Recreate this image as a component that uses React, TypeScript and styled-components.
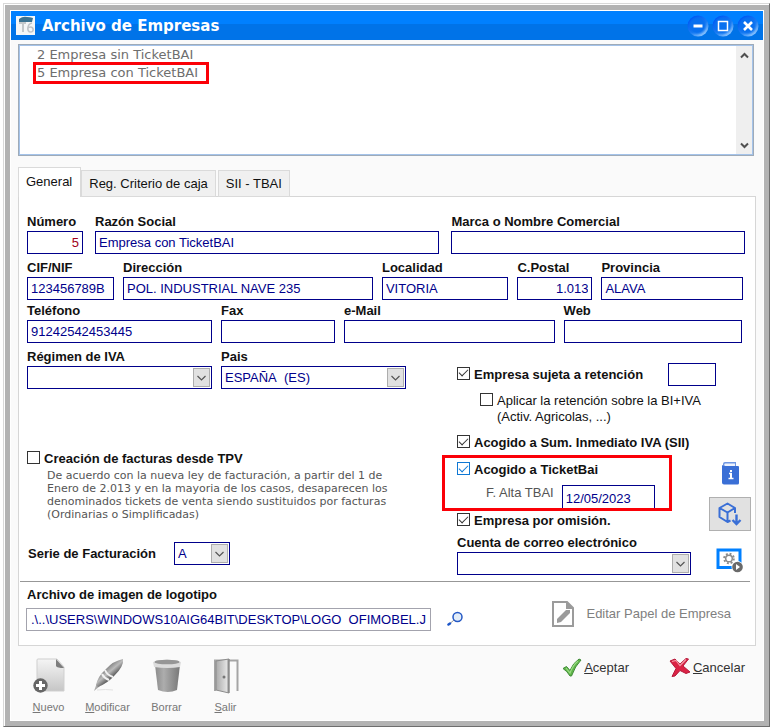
import React, { useId, useState } from "react";
import styled, { createGlobalStyle, css } from "styled-components";

const navy = "#00008b";
const sans = '"Liberation Sans", Arial, sans-serif';
const wide = 'Verdana, "DejaVu Sans", sans-serif';

const GlobalStyle = createGlobalStyle`
  *, *::before, *::after { box-sizing: border-box; }
  body { margin: 0; background: #fff; font: 13px/16px ${sans}; color: #111; }
  button, input, select { font: inherit; color: inherit; margin: 0; }
  button { background: none; border: 0; padding: 0; cursor: pointer; }
`;

/* ---------- window frame ---------- */
const Window = styled.div`
  margin: 3px 1px 2px 3px;
  padding: 1px 0 0 1px;
  border: 1px solid;
  border-color: #d9d9d9 #6e6e6e #6e6e6e #d9d9d9;
`;
const Frame = styled.div`
  border: 5px solid #b3b3b3;
  padding: 1px;
`;
const Surface = styled.main`
  background: #fafafa;
`;
const TitleBar = styled.header`
  display: flex;
  align-items: center;
  height: 29px;
  padding: 0 4px 0 5px;
  background: linear-gradient(#0080ff 0 13px, #0073e8 13px);
`;
const Title = styled.h1`
  flex: 1;
  margin: 0 0 0 7px;
  font: bold 15px/20px ${wide};
  color: #fff;
`;
const WindowButtons = styled.div`
  display: flex;
  gap: 3px;
`;
const RoundButton = styled.button`
  width: 22px;
  height: 22px;
  svg { display: block; }
`;

/* ---------- company list ---------- */
const ListBox = styled.section`
  display: flex;
  justify-content: space-between;
  height: 112px;
  margin: 4px 9px 0 7px;
  border: 1px solid #9fabb8;
  box-shadow: inset 0 0 0 1px #a4c3ea;
  padding: 1px;
  background: #fff;
`;
const CompanyList = styled.ul`
  list-style: none;
  margin: 0;
  padding: 0 0 0 13px;
  font: 13px/18px ${wide};
  color: #6e6e6e;
`;
const Company = styled.li<{ $marked?: boolean }>`
  padding: 0 4px;
  ${(p) => p.$marked && css`
    line-height: 16px;
    outline: 3px solid #fb0007;
    outline-offset: 0;
    margin: 1px 0 0 3px;
    padding: 0 8px 0 1px;
  `}
`;
const ScrollTrack = styled.div`
  display: flex;
  flex-direction: column;
  justify-content: space-between;
  align-items: center;
  width: 16px;
  padding: 6px 0 5px;
  background: #efefef;
`;

/* ---------- tabs ---------- */
const TabStrip = styled.div`
  display: flex;
  align-items: flex-end;
  gap: 2px;
  margin: 11px 0 -1px 7px;
`;
const Tab = styled.button<{ $active?: boolean }>`
  height: 27px;
  padding: 0 7px;
  border: 1px solid #dadada;
  background: #f0f0f0;
  ${(p) => p.$active && css`
    position: relative;
    height: 30px;
    margin-right: -2px;
    padding: 0 8px 2px 7px;
    border-bottom: 0;
    background: #fff;
  `}
`;
const Panel = styled.form`
  margin: 0 7px 0 7px;
  border: 1px solid #d6d6d6;
  background: #fff;
`;

/* ---------- fields ---------- */
const Rows = styled.div`
  display: flex;
  flex-direction: column;
  padding: 17px 10px 0 8px;
`;
const Row = styled.div<{ $cols: string; $gap: number; $end?: number; $height: number }>`
  display: grid;
  grid-template-columns: ${(p) => p.$cols};
  column-gap: ${(p) => p.$gap}px;
  align-content: start;
  min-height: ${(p) => p.$height}px;
  padding-right: ${(p) => p.$end ?? 0}px;
`;
const FieldBox = styled.div`
  display: flex;
  flex-direction: column;
  gap: 1px;
  min-width: 0;
`;
const Label = styled.label`
  font-weight: bold;
  line-height: 16px;
  white-space: nowrap;
`;
const Input = styled.input<{ $tone?: string; $right?: boolean; $w?: number }>`
  width: ${(p) => (p.$w ? `${p.$w}px` : "100%")};
  height: 23px;
  padding: 0 3px;
  border: 1px solid ${navy};
  border-radius: 0;
  background: #fff;
  color: ${(p) => p.$tone ?? navy};
  text-align: ${(p) => (p.$right ? "right" : "left")};
`;
const DateInput = styled(Input)`
  height: 26px;
`;
const PathInput = styled(Input)`
  padding: 0 4px;
  border-color: #a3a3ad;
`;
const SelectBox = styled.div<{ $w?: number }>`
  position: relative;
  width: ${(p) => (p.$w ? `${p.$w}px` : "100%")};
  svg {
    position: absolute;
    right: 2px;
    top: 2px;
    pointer-events: none;
  }
`;
const NativeSelect = styled.select`
  display: block;
  appearance: none;
  width: 100%;
  height: 23px;
  padding: 0 20px 0 3px;
  border: 1px solid ${navy};
  border-radius: 0;
  background: #fff;
  color: ${navy};
`;

const Drop = ({ id, value, w }: { id: string; value: string; w?: number }) => (
  <SelectBox $w={w}>
    <NativeSelect id={id} defaultValue={value}>
      <option value={value}>{value}</option>
    </NativeSelect>
    <svg width="17" height="19" viewBox="0 0 17 19">
      <rect x=".5" y=".5" width="16" height="18" fill="#e1e1e1" stroke="#adadad" />
      <path d="M4.5 8l4 4 4-4" fill="none" stroke="#555" strokeWidth="1.2" />
    </svg>
  </SelectBox>
);

type FieldProps = { label: string; value?: string; right?: boolean; tone?: string };
const Field = ({ label, value = "", right, tone }: FieldProps) => {
  const id = useId();
  return (
    <FieldBox>
      <Label htmlFor={id}>{label}</Label>
      <Input id={id} defaultValue={value} $right={right} $tone={tone} />
    </FieldBox>
  );
};
const SelectField = ({ label, value }: { label: string; value: string }) => {
  const id = useId();
  return (
    <FieldBox>
      <Label htmlFor={id}>{label}</Label>
      <Drop id={id} value={value} />
    </FieldBox>
  );
};

/* ---------- checkboxes ---------- */
const CheckLabel = styled.label<{ $plain?: boolean }>`
  display: flex;
  gap: 4px;
  font-weight: ${(p) => (p.$plain ? "normal" : "bold")};
  line-height: 16px;
  white-space: nowrap;
`;
const Tick = styled.input<{ $tone?: string }>`
  appearance: none;
  flex: none;
  display: grid;
  place-items: center;
  width: 13px;
  height: 13px;
  border: 1px solid ${(p) => p.$tone ?? "#333"};
  background: #fff;
  &:checked::before {
    content: "";
    width: 9px;
    height: 5px;
    margin-bottom: 3px;
    border: solid ${(p) => p.$tone ?? "#333"};
    border-width: 0 0 1px 1px;
    transform: rotate(-45deg);
  }
`;
type CheckProps = { children: React.ReactNode; on?: boolean; plain?: boolean; tone?: string };
const Check = ({ children, on, plain, tone }: CheckProps) => (
  <CheckLabel $plain={plain}>
    <Tick type="checkbox" defaultChecked={on} $tone={tone} />
    <span>{children}</span>
  </CheckLabel>
);

/* ---------- middle block ---------- */
const Middle = styled.div`
  display: grid;
  grid-template-columns: 379px minmax(0, 1fr) 42px;
  column-gap: 0;
  padding: 0 4px 6px 8px;
`;
const LeftColumn = styled.div`
  display: flex;
  flex-direction: column;
`;
const TpvBlock = styled.div`
  margin-top: 62px;
`;
const Note = styled.p`
  margin: 2px 0 0 20px;
  font: 11px/13px ${wide};
  color: #555;
  white-space: nowrap;
`;
const SeriesRow = styled.div`
  display: flex;
  align-items: center;
  gap: 18px;
  margin: 21px 0 0 1px;
`;
const RightColumn = styled.div`
  display: flex;
  flex-direction: column;
  padding: 14px 18px 0 51px;
`;
const RetentionRow = styled.div`
  display: flex;
  align-items: center;
  justify-content: space-between;
  width: 259px;
  height: 23px;
`;
const Indented = styled.div`
  margin: 7px 0 10px 23px;
`;
const RedBox = styled.div`
  height: 56px;
  width: 230px;
  margin: 4px 0 2px -15px;
  padding: 4px 12px 0;
  overflow: hidden;
  border: 3px solid #fb0007;
`;
const DateRow = styled.div`
  display: flex;
  align-items: flex-start;
  gap: 8px;
  margin: 7px 0 0 29px;
  color: #555;
  label { white-space: nowrap; }
`;
const MailBox = styled.div`
  margin-top: 6px;
  width: 234px;
`;
const SideIcons = styled.div`
  display: flex;
  flex-direction: column;
  justify-content: flex-end;
  align-items: center;
  padding-bottom: 2px;
  svg { display: block; }
`;
const SideButton = styled.button<{ $framed?: boolean }>`
  ${(p) => p.$framed && css`
    display: grid;
    place-items: center;
    width: 42px;
    height: 34px;
    margin: 12px 0 17px;
    background: #e1e1e1;
    border: 1px solid #b0b0b0;
  `}
`;
const Rule = styled.hr`
  margin: 0 5px 0 1px;
  border: 0;
  border-top: 1px solid #979797;
`;

/* ---------- logo file block ---------- */
const LogoRow = styled.div`
  display: flex;
  align-items: flex-start;
  padding: 5px 24px 14px 7px;
`;
const LogoField = styled(FieldBox)`
  flex: 0 1 405px;
  gap: 5px;
  label { padding-left: 1px; }
`;
const SearchButton = styled.button`
  margin: 24px 0 0 16px;
  svg { display: block; }
`;
const EditPaper = styled.button`
  display: flex;
  align-items: center;
  gap: 12px;
  margin: 14px 0 0 auto;
  color: #808080;
  white-space: nowrap;
`;

/* ---------- footer ---------- */
const Footer = styled.footer`
  display: flex;
  justify-content: space-between;
  align-items: flex-start;
  padding: 12px 18px 6px 8px;
`;
const Tools = styled.div`
  display: flex;
`;
const Tool = styled.button`
  display: flex;
  flex-direction: column;
  align-items: center;
  width: 59px;
  font-size: 11px;
  line-height: 14px;
  color: #777;
  gap: 6px;
`;
const Actions = styled.div`
  display: flex;
  gap: 40px;
`;
const Action = styled.button`
  display: flex;
  align-items: center;
  gap: 2px;
  color: #333;
`;

/* ---------- drawings ---------- */
const AppIcon = () => (
  <svg width="19" height="19" viewBox="0 0 19 19">
    <rect width="19" height="19" fill="#f4f6f7" />
    <path d="M3 3q4-3 8-2 3 0 6 1l-1 4H3z" fill="#3b7291" />
    <path d="M3 6h7v2H8v8H6V8H3z" fill="#c3c8cb" />
    <path d="M16 7c-5 1-5.500 9-1.500 9s3-5 0-5-3 2-2.500 3" fill="none" stroke="#c0c4c8" strokeWidth="1.600" />
  </svg>
);
const Orb = ({ children }: { children: React.ReactNode }) => (
  <svg width="22" height="22" viewBox="0 0 22 22">
    <defs>
      <linearGradient id="orb" x1=".25" y1=".1" x2=".85" y2=".9">
        <stop offset="0" stopColor="#0058f5" />
        <stop offset=".55" stopColor="#1a7df2" />
        <stop offset="1" stopColor="#8fc6ff" />
      </linearGradient>
      <radialGradient id="orbFace">
        <stop offset=".7" stopColor="#0870f0" />
        <stop offset="1" stopColor="#0870f0" stopOpacity="0" />
      </radialGradient>
    </defs>
    <circle cx="11" cy="11" r="10.500" fill="url(#orb)" />
    <circle cx="10.500" cy="10.500" r="9.500" fill="url(#orbFace)" />
    <g fill="none" stroke="#fff">{children}</g>
  </svg>
);
const Arrow = ({ down }: { down?: boolean }) => (
  <svg width="9" height="7" viewBox="0 0 9 7">
    <path d={down ? "M1 1.500l3.500 3.500L8 1.500" : "M1 5.500L4.500 2 8 5.500"} fill="none" stroke="#505050" strokeWidth="2" />
  </svg>
);
const BookIcon = () => (
  <svg width="17" height="23" viewBox="0 0 17 23">
    <path d="M3 0h11v4H1V2a2 2 0 0 1 2-2z" fill="#6f97e2" />
    <path d="M3.500 1.500H13V4H3.500a1.200 1.200 0 0 1 0-2.500z" fill="#eef3fd" />
    <path d="M0 3Q1 4 3 4h13a1 1 0 0 1 1 1v16a1.500 1.500 0 0 1-1.500 1.500H2A2 2 0 0 1 0 20.500z" fill="#3a6fd6" />
    <path d="M7 11.500h2V16M6.500 16.500h5" fill="none" stroke="#fff" strokeWidth="1.300" />
    <rect x="8" y="8" width="2" height="2" fill="#fff" />
    <path d="M9 11v5" stroke="#fff" strokeWidth="2" />
  </svg>
);
const CubeIcon = () => (
  <svg width="24" height="24" viewBox="0 0 24 24" fill="none" stroke="#3a6fd6" strokeWidth="2" strokeLinejoin="round">
    <path d="M17 11V6L9.500 1.500 1.500 6v9L9.500 20l3-1.500M1.500 6l8 4.500L17 6M9.500 10.500V20" />
    <path d="M18.500 12.500v9M14.500 18l4 4 4-4" strokeWidth="2.400" strokeLinejoin="miter" />
  </svg>
);
const MonitorIcon = () => (
  <svg width="28" height="25" viewBox="0 0 28 25">
    <rect x="2" y="2" width="22" height="17.500" fill="#fff" stroke="#0080ff" strokeWidth="3" />
    <circle cx="13" cy="10.500" r="4.800" fill="none" stroke="#8b8b8b" strokeWidth="2" strokeDasharray="1.900 1.870" />
    <circle cx="13" cy="10.500" r="3.300" fill="#fff" stroke="#8b8b8b" strokeWidth="1.500" />
    <circle cx="21.500" cy="19" r="6" fill="#fff" />
    <circle cx="21.500" cy="19" r="5.300" fill="#6a6a6a" />
    <path d="M20 16l4 3-4 3z" fill="#fff" />
  </svg>
);
const LensIcon = () => (
  <svg width="16" height="16" viewBox="0 0 16 16">
    <path d="M7 9l-4 3.500" stroke="#999" strokeWidth="1" />
    <path d="M3 12.500L1.500 13.500" stroke="#1b55c8" strokeWidth="2.500" strokeLinecap="round" />
    <circle cx="10.500" cy="6" r="4.500" fill="#e3edf8" stroke="#2458c4" strokeWidth="1.500" />
  </svg>
);
const PaperIcon = () => (
  <svg width="22" height="26" viewBox="0 0 22 26">
    <path d="M1 1h14l6 6v18H1z" fill="#fff" stroke="#9b9b9b" strokeWidth="2" />
    <path d="M14 0l8 8h-8z" fill="#9b9b9b" />
    <path d="M5 22v-4l9-9h4v3l-9 9z" fill="#9b9b9b" />
  </svg>
);
const NewIcon = () => (
  <svg width="34" height="36" viewBox="0 0 34 36">
    <defs>
      <linearGradient id="sheet" x1="0" y1="0" x2="0" y2="1">
        <stop offset="0" stopColor="#f5f5f5" /><stop offset="1" stopColor="#c6c6c6" />
      </linearGradient>
    </defs>
    <path d="M6 1h19l7 8v24H6a1 1 0 0 1-1-1V2a1 1 0 0 1 1-1z" fill="url(#sheet)" stroke="#cfcfcf" />
    <path d="M24 1l8 9q-7 0-8-2z" fill="#7d7d7d" />
    <circle cx="8.500" cy="27.500" r="7.200" fill="#666" />
    <path d="M8.500 23v9M4 27.500h9" stroke="#fff" strokeWidth="3" />
  </svg>
);
const PenIcon = () => (
  <svg width="34" height="36" viewBox="0 0 34 36">
    <defs>
      <linearGradient id="pen" x1=".2" y1=".2" x2=".7" y2=".8">
        <stop offset=".2" stopColor="#777" /><stop offset=".5" stopColor="#bbb" /><stop offset=".75" stopColor="#666" />
      </linearGradient>
    </defs>
    <path d="M6 32q9-1 16 0" fill="none" stroke="#e2e2e2" />
    <path d="M3 33l3-8 3 3z" fill="#aaa" />
    <path d="M5 27Q7 18 15 11 22 3 32 1q1 7-8 16-7 8-17 12z" fill="url(#pen)" />
    <path d="M14 12q2 5 8 7M11 16q2 4 7 6" fill="none" stroke="#f2f2f2" strokeWidth="2" />
  </svg>
);
const BinIcon = () => (
  <svg width="34" height="36" viewBox="0 0 34 36">
    <defs>
      <linearGradient id="bin" x1="0" y1="0" x2="1" y2="0">
        <stop offset="0" stopColor="#8b8b8b" /><stop offset=".35" stopColor="#adadad" /><stop offset="1" stopColor="#777" />
      </linearGradient>
    </defs>
    <path d="M5 7h25l-3 25q-9 4-19 0z" fill="url(#bin)" />
    <path d="M3 4q14-5 28 0l-1 5q-12 2-26 0z" fill="#dcdcdc" />
    <ellipse cx="17" cy="4" rx="12.500" ry="2.300" fill="#969696" />
  </svg>
);
const DoorIcon = () => (
  <svg width="34" height="36" viewBox="0 0 34 36">
    <defs>
      <linearGradient id="door" x1="0" y1="0" x2="1" y2="0">
        <stop offset="0" stopColor="#aaa" /><stop offset="1" stopColor="#ededed" />
      </linearGradient>
    </defs>
    <path d="M6 33V2.500h22.500V33" fill="none" stroke="#a5a5a5" strokeWidth="2" />
    <path d="M7 3l13-2v34L7 32z" fill="url(#door)" stroke="#8c8c8c" />
    <path d="M19.500 1v34" stroke="#8c8c8c" strokeWidth="2" />
    <circle cx="15" cy="19" r="1.500" fill="#777" />
  </svg>
);
const YesIcon = () => (
  <svg width="20" height="19" viewBox="0 0 20 19">
    <path d="M1 10.500l3.500-2 3.500 4Q11 5 17 1l2 1Q13 8 9.500 18H8Q5 13 1 10.500z" fill="#5fb548" stroke="#3d8a35" />
    <path d="M4 10l4 5Q11 7 16 3" fill="none" stroke="#9bdc85" strokeWidth="1.200" />
  </svg>
);
const NoIcon = () => (
  <svg width="22" height="19" viewBox="0 0 22 19">
    <path d="M1 3l5-2 5 5 6-5.500 2.500.5-5.500 7 7 6-4 1.500-6-3-5 5.500-3 .5 4-8z" fill="#db2345" stroke="#b5193a" />
    <path d="M3 3.500l4-1 4 5 6-6" fill="none" stroke="#f29aa6" strokeWidth="1.200" />
  </svg>
);

const tabNames = ["General", "Reg. Criterio de caja", "SII - TBAI"];

export default function App() {
  const [tab, setTab] = useState(0);
  return (
    <>
      <GlobalStyle />
      <Window>
        <Frame>
          <Surface>
            <TitleBar>
              <AppIcon />
              <Title>Archivo de Empresas</Title>
              <WindowButtons>
                <RoundButton aria-label="Minimizar"><Orb><path d="M6.500 11h9" strokeWidth="3" /></Orb></RoundButton>
                <RoundButton aria-label="Maximizar"><Orb><rect x="6.500" y="6.500" width="9" height="9" strokeWidth="1.500" /></Orb></RoundButton>
                <RoundButton aria-label="Cerrar"><Orb><path d="M7 7l8 8M15 7l-8 8" strokeWidth="2.600" /></Orb></RoundButton>
              </WindowButtons>
            </TitleBar>

            <ListBox>
              <CompanyList>
                <Company>2 Empresa sin TicketBAI</Company>
                <Company $marked>5 Empresa con TicketBAI</Company>
              </CompanyList>
              <ScrollTrack><Arrow /><Arrow down /></ScrollTrack>
            </ListBox>

            <TabStrip role="tablist">
              {tabNames.map((name, i) => (
                <Tab key={name} type="button" role="tab" aria-selected={tab === i} $active={tab === i} onClick={() => setTab(i)}>
                  {name}
                </Tab>
              ))}
            </TabStrip>

            <Panel onSubmit={(e) => e.preventDefault()}>
              <Rows>
                <Row $cols="56px 345fr 294fr" $gap={12} $height={46}>
                  <Field label="Número" value="5" right tone="#a00020" />
                  <Field label="Razón Social" value="Empresa con TicketBAI" />
                  <Field label="Marca o Nombre Comercial" />
                </Row>
                <Row $cols="87px 249fr 126fr 75px 141fr" $gap={9} $end={2} $height={43}>
                  <Field label="CIF/NIF" value="123456789B" />
                  <Field label="Dirección" value="POL. INDUSTRIAL NAVE 235" />
                  <Field label="Localidad" value="VITORIA" />
                  <Field label="C.Postal" value="1.013" right />
                  <Field label="Provincia" value="ALAVA" />
                </Row>
                <Row $cols="185px 114px 209fr 177fr" $gap={9} $end={3} $height={46}>
                  <Field label="Teléfono" value="91242542453445" />
                  <Field label="Fax" />
                  <Field label="e-Mail" />
                  <Field label="Web" />
                </Row>
              </Rows>

              <Middle>
                <LeftColumn>
                  <Row $cols="1fr 1fr" $gap={9} $height={40}>
                    <SelectField label="Régimen de IVA" value="" />
                    <SelectField label="Pais" value={"ESPAÑA\u00a0 (ES)"} />
                  </Row>
                  <TpvBlock>
                    <Check>Creación de facturas desde TPV</Check>
                    <Note>
                      De acuerdo con la nueva ley de facturación, a partir del 1 de<br />
                      Enero de 2.013 y en la mayoria de los casos, desaparecen los<br />
                      denominados tickets de venta siendo sustituidos por facturas<br />
                      (Ordinarias o Simplificadas)
                    </Note>
                  </TpvBlock>
                  <SeriesRow>
                    <Label htmlFor="serie">Serie de Facturación</Label>
                    <Drop id="serie" value="A" w={56} />
                  </SeriesRow>
                </LeftColumn>

                <RightColumn>
                  <RetentionRow>
                    <Check on>Empresa sujeta a retención</Check>
                    <Input aria-label="Porcentaje de retención" $w={48} />
                  </RetentionRow>
                  <Indented>
                    <Check plain>Aplicar la retención sobre la BI+IVA<br />(Activ. Agricolas, ...)</Check>
                  </Indented>
                  <Check on>Acogido a Sum. Inmediato IVA (SII)</Check>
                  <RedBox>
                    <Check on tone="#0f78d4">Acogido a TicketBai</Check>
                    <DateRow>
                      <label htmlFor="alta">F. Alta TBAI</label>
                      <DateInput id="alta" defaultValue="12/05/2023" $w={93} />
                    </DateRow>
                  </RedBox>
                  <Check on>Empresa por omisión.</Check>
                  <MailBox>
                    <SelectField label="Cuenta de correo electrónico" value="" />
                  </MailBox>
                </RightColumn>

                <SideIcons>
                  <SideButton type="button" aria-label="Información"><BookIcon /></SideButton>
                  <SideButton type="button" aria-label="Descargar" $framed><CubeIcon /></SideButton>
                  <SideButton type="button" aria-label="Configurar"><MonitorIcon /></SideButton>
                </SideIcons>
              </Middle>

              <Rule />

              <LogoRow>
                <LogoField>
                  <Label htmlFor="logo">Archivo de imagen de logotipo</Label>
                  <PathInput id="logo" defaultValue={".\\..\\USERS\\WINDOWS10AIG64BIT\\DESKTOP\\LOGO  OFIMOBEL.JPG"} />
                </LogoField>
                <SearchButton type="button" aria-label="Buscar"><LensIcon /></SearchButton>
                <EditPaper type="button"><PaperIcon />Editar Papel de Empresa</EditPaper>
              </LogoRow>
            </Panel>

            <Footer>
              <Tools>
                <Tool><NewIcon /><span><u>N</u>uevo</span></Tool>
                <Tool><PenIcon /><span><u>M</u>odificar</span></Tool>
                <Tool><BinIcon /><span>Borrar</span></Tool>
                <Tool><DoorIcon /><span><u>S</u>alir</span></Tool>
              </Tools>
              <Actions>
                <Action><YesIcon /><span><u>A</u>ceptar</span></Action>
                <Action><NoIcon /><span><u>C</u>ancelar</span></Action>
              </Actions>
            </Footer>
          </Surface>
        </Frame>
      </Window>
    </>
  );
}
